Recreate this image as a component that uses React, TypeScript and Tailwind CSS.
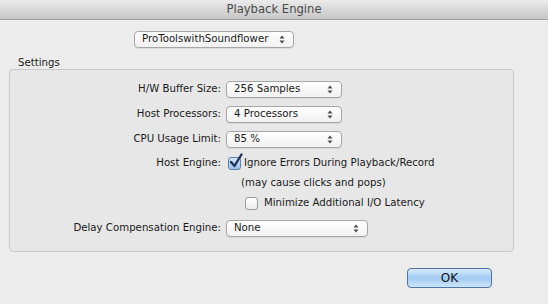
import React from "react";

const Arrows = () => (
  <svg width="6" height="9" viewBox="0 0 6 9" className="shrink-0">
    <path d="M3 0.5 L5.5 3.5 L0.5 3.5 Z" fill="#4a4a4a" />
    <path d="M3 8.5 L5.5 5.5 L0.5 5.5 Z" fill="#4a4a4a" />
  </svg>
);

const Popup = ({ text, w }: { text: string; w: string }) => (
  <div
    className={`${w} h-[17px] flex items-center justify-between pl-[7px] pr-[8px] rounded-[4px] border border-[#a6a6a6] bg-gradient-to-b from-[#ffffff] to-[#f1f1f1] shadow-[0_1px_0_rgba(0,0,0,0.06)] text-[#1a1a1a]`}
  >
    <span className="leading-none">{text}</span>
    <Arrows />
  </div>
);

const Row = ({ label, mt, h, children }: { label: string; mt: string; h: string; children?: React.ReactNode }) => (
  <div className={`grid grid-cols-[211px_1fr] gap-x-[5px] items-center ${mt} ${h}`}>
    <div className="text-right text-[#1a1a1a] leading-none">{label}</div>
    <div className="flex items-center">{children}</div>
  </div>
);

export default function App() {
  return (
    <div className="w-[548px] h-[304px] overflow-hidden bg-[#ececec] font-['DejaVu_Sans',sans-serif] text-[10.2px]">
      <div className="h-[20px] flex items-center justify-center bg-gradient-to-b from-[#ebebeb] to-[#c6c6c6] border-b border-[#a2a2a2] text-[11.6px] text-[#4a4a4a]">
        Playback Engine
      </div>

      <div className="mt-[11px] ml-[134px]">
        <Popup text="ProToolswithSoundflower" w="w-[160px]" />
      </div>

      <div className="mt-[8px] pl-[18px] h-[13px] leading-[13px] text-[#1a1a1a]">Settings</div>

      <div className="ml-[9px] w-[505px] h-[183px] rounded-[4px] border border-[#c9c9c9] bg-[#e7e7e7] flex flex-col">
        <Row label="H/W Buffer Size:" mt="mt-[11px]" h="h-[17px]">
          <Popup text="256 Samples" w="w-[116px]" />
        </Row>
        <Row label="Host Processors:" mt="mt-[8px]" h="h-[17px]">
          <Popup text="4 Processors" w="w-[116px]" />
        </Row>
        <Row label="CPU Usage Limit:" mt="mt-[8px]" h="h-[17px]">
          <Popup text="85 %" w="w-[116px]" />
        </Row>
        <Row label="Host Engine:" mt="mt-[8px]" h="h-[14px]">
          <div className="relative ml-[2px] w-[13px] h-[13px] rounded-[3px] border border-[#5b7fae] bg-gradient-to-b from-[#d6e6f8] to-[#9dc2ec]">
            <svg width="14" height="16" viewBox="0 0 14 16" className="absolute left-[0px] top-[-5px]">
              <path d="M2 9 L5.5 13 L12.5 1.5" fill="none" stroke="#1d3358" strokeWidth="2.4" strokeLinecap="round" strokeLinejoin="round" />
            </svg>
          </div>
          <span className="ml-[3px] leading-none text-[#1a1a1a]">Ignore Errors During Playback/Record</span>
        </Row>
        <Row label="" mt="mt-[6px]" h="h-[14px]">
          <span className="ml-[15px] leading-none text-[#1a1a1a]">(may cause clicks and pops)</span>
        </Row>
        <Row label="" mt="mt-[6px]" h="h-[14px]">
          <div className="ml-[19px] w-[13px] h-[13px] rounded-[3px] border border-[#9b9b9b] bg-gradient-to-b from-[#ffffff] to-[#ececec]" />
          <span className="ml-[6px] leading-none text-[#1a1a1a]">Minimize Additional I/O Latency</span>
        </Row>
        <Row label="Delay Compensation Engine:" mt="mt-[10px]" h="h-[17px]">
          <Popup text="None" w="w-[142px]" />
        </Row>
      </div>

      <div className="mt-[16px] ml-[407px]">
        <button className="w-[85px] h-[20px] rounded-[4px] border border-[#4f74a8] bg-gradient-to-b from-[#d9ebfc] via-[#9fcaf3] to-[#cfe6fb] text-[12px] text-[#111] leading-none flex items-center justify-center">
          OK
        </button>
      </div>
    </div>
  );
}
